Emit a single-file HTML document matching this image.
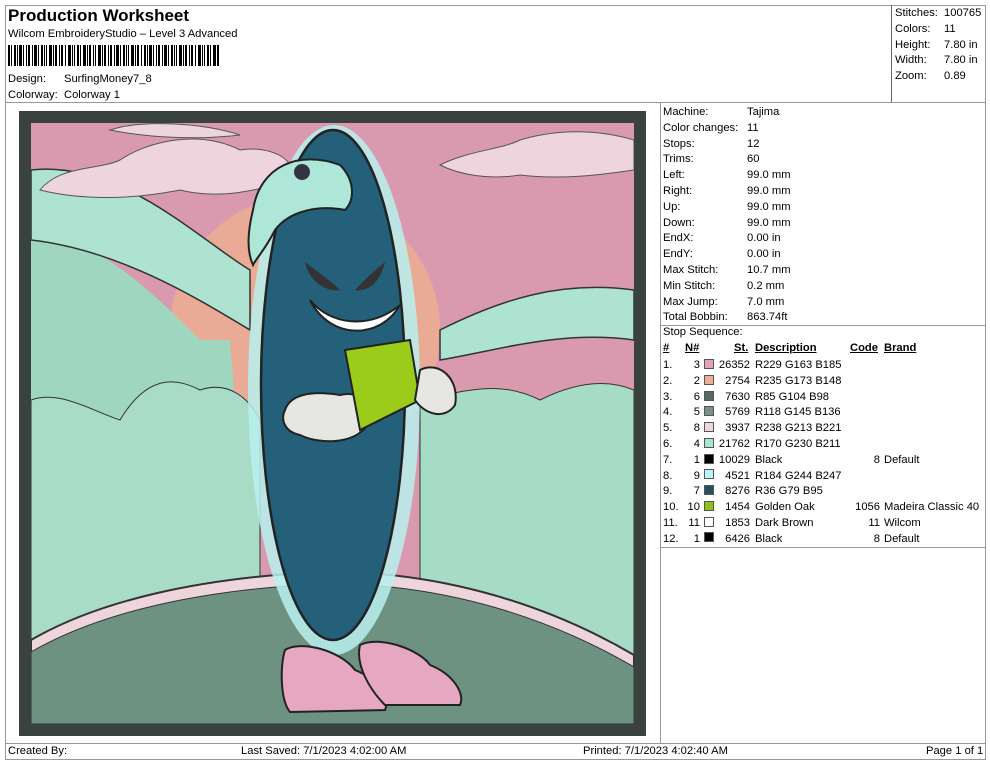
<!DOCTYPE html>
<html><head><meta charset="utf-8"><style>
*{margin:0;padding:0;box-sizing:border-box}
body{width:990px;height:762px;background:#fff;font-family:"Liberation Sans",Arial,sans-serif;font-size:11.2px;color:#000;position:relative;overflow:hidden}
.a{position:absolute;white-space:nowrap;line-height:13px}
.l{position:absolute;background:#999}
u{text-decoration:underline}
.sw{position:absolute;width:10px;height:10px;border:1px solid #555}
</style></head><body>
<div class="l" style="left:5px;top:5px;width:980px;height:1px"></div>
<div class="l" style="left:5px;top:5px;width:1px;height:755px"></div>
<div class="l" style="left:985px;top:5px;width:1px;height:755px"></div>
<div class="l" style="left:5px;top:102px;width:980px;height:1px"></div>
<div class="l" style="left:891px;top:5px;width:1px;height:97px;background:#666"></div>
<div class="l" style="left:660px;top:102px;width:1px;height:641px"></div>
<div class="l" style="left:660px;top:325px;width:325px;height:1px"></div>
<div class="l" style="left:660px;top:547px;width:325px;height:1px"></div>
<div class="l" style="left:5px;top:743px;width:980px;height:1px"></div>
<div class="l" style="left:5px;top:759px;width:980px;height:1px"></div>

<div class="a" style="left:8px;top:6px;font-size:17px;font-weight:bold;line-height:20px">Production Worksheet</div>
<div class="a" style="left:8px;top:28px">Wilcom EmbroideryStudio – Level 3 Advanced</div>
<svg class="a" style="left:8px;top:45px" width="212" height="21">
<g fill="#000">
<rect x="0" y="0" width="2" height="21"/><rect x="3" width="1" height="21"/><rect x="6" width="2" height="21"/><rect x="9" width="1" height="21"/><rect x="11" width="3" height="21"/><rect x="15" width="1" height="21"/><rect x="18" width="1" height="21"/><rect x="20" width="2" height="21"/><rect x="24" width="1" height="21"/><rect x="26" width="3" height="21"/><rect x="30" width="1" height="21"/><rect x="33" width="2" height="21"/><rect x="36" width="1" height="21"/><rect x="38" width="1" height="21"/><rect x="41" width="3" height="21"/><rect x="45" width="1" height="21"/><rect x="47" width="2" height="21"/><rect x="51" width="1" height="21"/><rect x="53" width="2" height="21"/><rect x="57" width="1" height="21"/><rect x="60" width="3" height="21"/><rect x="64" width="1" height="21"/><rect x="66" width="1" height="21"/><rect x="69" width="2" height="21"/><rect x="72" width="1" height="21"/><rect x="75" width="3" height="21"/><rect x="79" width="1" height="21"/><rect x="81" width="2" height="21"/><rect x="85" width="1" height="21"/><rect x="87" width="1" height="21"/><rect x="90" width="3" height="21"/><rect x="94" width="1" height="21"/><rect x="96" width="2" height="21"/><rect x="100" width="1" height="21"/><rect x="102" width="2" height="21"/><rect x="106" width="1" height="21"/><rect x="108" width="3" height="21"/><rect x="112" width="1" height="21"/><rect x="115" width="2" height="21"/><rect x="118" width="1" height="21"/><rect x="120" width="1" height="21"/><rect x="123" width="3" height="21"/><rect x="127" width="1" height="21"/><rect x="129" width="2" height="21"/><rect x="133" width="1" height="21"/><rect x="136" width="2" height="21"/><rect x="139" width="1" height="21"/><rect x="141" width="3" height="21"/><rect x="145" width="1" height="21"/><rect x="148" width="1" height="21"/><rect x="150" width="2" height="21"/><rect x="154" width="1" height="21"/><rect x="156" width="3" height="21"/><rect x="160" width="1" height="21"/><rect x="163" width="2" height="21"/><rect x="166" width="1" height="21"/><rect x="168" width="1" height="21"/><rect x="171" width="3" height="21"/><rect x="175" width="1" height="21"/><rect x="177" width="2" height="21"/><rect x="181" width="1" height="21"/><rect x="183" width="2" height="21"/><rect x="187" width="1" height="21"/><rect x="190" width="3" height="21"/><rect x="194" width="1" height="21"/><rect x="196" width="1" height="21"/><rect x="199" width="2" height="21"/><rect x="202" width="1" height="21"/><rect x="205" width="3" height="21"/><rect x="209" width="2" height="21"/>
</g></svg>
<div class="a" style="left:8px;top:73px">Design:</div><div class="a" style="left:64px;top:73px">SurfingMoney7_8</div>
<div class="a" style="left:8px;top:89px">Colorway:</div><div class="a" style="left:64px;top:89px">Colorway 1</div>

<div class="a" style="left:895px;top:6px;line-height:15.8px">Stitches:<br>Colors:<br>Height:<br>Width:<br>Zoom:</div>
<div class="a" style="left:944px;top:6px;line-height:15.8px">100765<br>11<br>7.80 in<br>7.80 in<br>0.89</div>

<div class="a" style="left:663px;top:105px;line-height:15.8px">Machine:<br>Color changes:<br>Stops:<br>Trims:<br>Left:<br>Right:<br>Up:<br>Down:<br>EndX:<br>EndY:<br>Max Stitch:<br>Min Stitch:<br>Max Jump:<br>Total Bobbin:</div>
<div class="a" style="left:747px;top:105px;line-height:15.8px">Tajima<br>11<br>12<br>60<br>99.0 mm<br>99.0 mm<br>99.0 mm<br>99.0 mm<br>0.00 in<br>0.00 in<br>10.7 mm<br>0.2 mm<br>7.0 mm<br>863.74ft</div>

<div class="a" style="left:663px;top:326px">Stop Sequence:</div>
<div class="a" style="left:663px;top:342px;font-weight:bold"><u>#</u></div>
<div class="a" style="left:685px;top:342px;font-weight:bold"><u>N#</u></div>
<div class="a" style="left:734px;top:342px;font-weight:bold"><u>St.</u></div>
<div class="a" style="left:755px;top:342px;font-weight:bold"><u>Description</u></div>
<div class="a" style="left:850px;top:342px;font-weight:bold"><u>Code</u></div>
<div class="a" style="left:884px;top:342px;font-weight:bold"><u>Brand</u></div>

<div class="a" style="left:663px;top:358px;line-height:15.8px">1.<br>2.<br>3.<br>4.<br>5.<br>6.<br>7.<br>8.<br>9.<br>10.<br>11.<br>12.</div>
<div class="a" style="left:680px;top:358px;line-height:15.8px;width:20px;text-align:right">3<br>2<br>6<br>5<br>8<br>4<br>1<br>9<br>7<br>10<br>11<br>1</div>
<div class="a" style="left:710px;top:358px;line-height:15.8px;width:40px;text-align:right">26352<br>2754<br>7630<br>5769<br>3937<br>21762<br>10029<br>4521<br>8276<br>1454<br>1853<br>6426</div>
<div class="a" style="left:755px;top:358px;line-height:15.8px">R229 G163 B185<br>R235 G173 B148<br>R85 G104 B98<br>R118 G145 B136<br>R238 G213 B221<br>R170 G230 B211<br>Black<br>R184 G244 B247<br>R36 G79 B95<br>Golden Oak<br>Dark Brown<br>Black</div>
<div class="a" style="left:840px;top:453px;line-height:15.8px;width:40px;text-align:right">8<br><br><br>1056<br>11<br>8</div>
<div class="a" style="left:884px;top:453px;line-height:15.8px">Default<br><br><br>Madeira Classic 40<br>Wilcom<br>Default</div>

<div class="sw" style="left:704px;top:359px;background:#e5a3b9"></div>
<div class="sw" style="left:704px;top:375px;background:#ebad94"></div>
<div class="sw" style="left:704px;top:391px;background:#556862"></div>
<div class="sw" style="left:704px;top:406px;background:#769188"></div>
<div class="sw" style="left:704px;top:422px;background:#eed5dd"></div>
<div class="sw" style="left:704px;top:438px;background:#aae6d3"></div>
<div class="sw" style="left:704px;top:454px;background:#000"></div>
<div class="sw" style="left:704px;top:469px;background:#b8f4f7"></div>
<div class="sw" style="left:704px;top:485px;background:#244f5f"></div>
<div class="sw" style="left:704px;top:501px;background:#8fc01a"></div>
<div class="sw" style="left:704px;top:517px;background:#fff"></div>
<div class="sw" style="left:704px;top:532px;background:#000"></div>

<div class="a" style="left:8px;top:745px">Created By:</div>
<div class="a" style="left:241px;top:745px">Last Saved: 7/1/2023 4:02:00 AM</div>
<div class="a" style="left:583px;top:745px">Printed: 7/1/2023 4:02:40 AM</div>
<div class="a" style="left:926px;top:745px">Page 1 of 1</div>

<svg style="position:absolute;left:0;top:0" width="660" height="743">
<defs><clipPath id="c"><rect x="31" y="123" width="603" height="601"/></clipPath></defs>
<rect x="19" y="111" width="627" height="625" fill="#3a423f"/>
<g clip-path="url(#c)">
<rect x="31" y="123" width="603" height="601" fill="#d99ab0"/>
<circle cx="305" cy="330" r="135" fill="#e9ab95"/>
<path d="M31 240 C90 230 150 290 200 340 L230 340 L260 724 L31 724 Z" fill="#9fd6bf"/>
<path d="M31 170 C120 160 200 240 250 270 L250 330 C200 300 120 250 31 240 Z" fill="#aee3d1" stroke="#333" stroke-width="1.5"/>
<path d="M120 420 C150 370 180 380 200 390 C230 380 250 400 260 420 L260 724 L31 724 L31 400 C60 390 90 410 120 420Z" fill="#a8dcc6" stroke="#333" stroke-width="1"/>
<path d="M440 330 C500 300 560 280 634 290 L634 340 C560 330 500 350 440 360Z" fill="#aee3d1" stroke="#333" stroke-width="1.5"/>
<path d="M420 400 C470 390 500 380 540 400 C580 380 610 380 634 390 L634 724 L420 724Z" fill="#a6dcc5" stroke="#333" stroke-width="1"/>
<g fill="#eed5dd" stroke="#555" stroke-width="1">
<path d="M40 190 C60 165 100 170 120 160 C150 140 200 130 240 150 C270 145 300 160 290 180 C260 190 220 200 180 190 C130 200 80 200 40 190Z"/>
<path d="M440 165 C470 150 500 150 520 140 C560 128 600 130 634 140 L634 170 C600 175 560 180 520 175 C490 180 460 175 440 165Z"/>
<path d="M110 130 C140 120 200 122 240 135 C200 140 150 138 110 130Z"/>
</g>
<path d="M31 640 C100 600 200 578 320 572 C430 570 540 600 634 655 L634 724 L31 724Z" fill="#eed5dd" stroke="#333" stroke-width="2"/>
<path d="M31 652 C100 612 200 590 320 584 C430 582 540 612 634 667 L634 724 L31 724Z" fill="#6e9282" stroke="#333" stroke-width="1"/>
</g>
<ellipse cx="334" cy="390" rx="86" ry="265" fill="#b8f0ef" opacity="0.85"/>
<ellipse cx="333" cy="385" rx="72" ry="255" fill="#24607a" stroke="#222" stroke-width="2.5"/>
<path d="M253 210 C260 165 300 150 340 165 C355 180 355 200 345 210 C320 205 290 210 275 230 C265 250 255 260 253 265 C246 250 248 230 253 210Z" fill="#aee6d8" stroke="#222" stroke-width="2"/>
<circle cx="302" cy="172" r="8" fill="#334" />
<path d="M305 262 C315 270 330 280 340 290 C330 292 310 285 305 262Z" fill="#333"/>
<path d="M385 262 C375 270 362 282 355 290 C365 292 380 285 385 262Z" fill="#333"/>
<path d="M310 300 C330 325 370 330 400 305 C380 340 330 340 310 300Z" fill="#fff" stroke="#222" stroke-width="2"/>
<path d="M285 410 C290 395 310 390 340 395 C360 390 375 405 370 420 C360 445 320 445 300 435 C285 432 280 420 285 410Z" fill="#e6e6e2" stroke="#222" stroke-width="2"/>
<path d="M345 350 L410 340 L420 400 L360 430 Z" fill="#9ccc1a" stroke="#222" stroke-width="2"/>
<path d="M420 370 C440 360 460 380 455 405 C445 420 425 415 415 400Z" fill="#e6e6e2" stroke="#222" stroke-width="2"/>
<path d="M285 650 C300 640 340 650 355 670 C380 680 390 700 385 710 L290 712 C280 700 280 665 285 650Z" fill="#e6a8c0" stroke="#222" stroke-width="2"/>
<path d="M360 645 C380 635 420 650 430 665 C455 675 465 695 460 705 L385 705 C370 690 355 665 360 645Z" fill="#e6a8c0" stroke="#222" stroke-width="2"/>
</svg>
</body></html>
